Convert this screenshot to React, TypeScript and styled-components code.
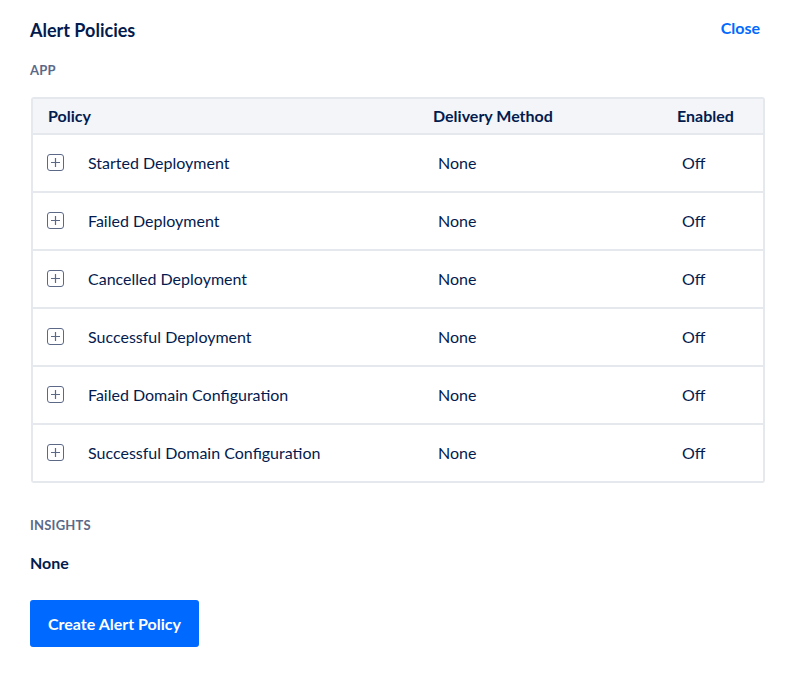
import React from "react";
import styled, { createGlobalStyle } from "styled-components";

const Global = createGlobalStyle`
  html, body { margin: 0; padding: 0; background: #fff; }
  body { font-family: "Lato", "Liberation Sans", sans-serif; color: #031b4e; }
`;

const Page = styled.div`
  padding: 18px 33px 36px 30px;
`;

const TopBar = styled.div`
  display: flex;
  justify-content: space-between;
  align-items: center;
  height: 24px;
`;

const Title = styled.h1`
  margin: 0;
  font-size: 18px;
  font-weight: 700;
  color: #031b4e;
`;

const CloseLink = styled.a`
  font-size: 16px;
  font-weight: 700;
  color: #0069ff;
  margin-right: 5px;
  margin-top: -6px;
  cursor: pointer;
`;

const SectionLabel = styled.div<{ $top: number }>`
  margin-top: ${(p) => p.$top}px;
  font-size: 13px;
  font-weight: 700;
  color: #5b6987;
  letter-spacing: 0.2px;
  line-height: 16px;
`;

const Table = styled.div`
  margin-top: 19px;
  margin-left: 1px;
  border: 2px solid #e5e8ed;
  border-radius: 3px;
`;

const Row = styled.div<{ $head?: boolean }>`
  display: grid;
  grid-template-columns: 400px 244px 1fr;
  align-items: center;
  box-sizing: border-box;
  height: ${(p) => (p.$head ? 36 : 58)}px;
  padding-bottom: 2px;
  background: ${(p) => (p.$head ? "#f3f5f9" : "#fff")};
  border-bottom: 2px solid #e5e8ed;
  &:last-child { border-bottom: none; height: 56px; }
  font-size: 16px;
  font-weight: ${(p) => (p.$head ? 700 : 400)};
`;

const HeadCell = styled.div<{ $first?: boolean }>`
  padding-left: ${(p) => (p.$first ? 15 : 0)}px;
`;

const Cell = styled.div`
  padding-left: 5px;
`;

const NameCell = styled.div`
  display: flex;
  align-items: center;
  padding-left: 14px;
  gap: 24px;
`;

const ExpandBox = styled.span`
  width: 15px;
  height: 15px;
  border: 1px solid #5b6987;
  border-radius: 3px;
  display: inline-flex;
  align-items: center;
  justify-content: center;
  flex: none;
`;

const Value = styled.div`
  margin-top: 20px;
  font-size: 16px;
  font-weight: 700;
`;

const PrimaryButton = styled.button`
  margin-top: 28px;
  width: 169px;
  height: 47px;
  border: none;
  border-radius: 3px;
  background: #0069ff;
  color: #fff;
  font-family: inherit;
  font-size: 16px;
  font-weight: 700;
  cursor: pointer;
`;

const policies = [
  "Started Deployment",
  "Failed Deployment",
  "Cancelled Deployment",
  "Successful Deployment",
  "Failed Domain Configuration",
  "Successful Domain Configuration",
];

const Plus = () => (
  <svg width="11" height="11" viewBox="0 0 11 11">
    <path d="M5.5 1v9M1 5.5h9" stroke="#5b6987" strokeWidth="1.2" fill="none" />
  </svg>
);

export default function App() {
  return (
    <Page>
      <Global />
      <TopBar>
        <Title>Alert Policies</Title>
        <CloseLink>Close</CloseLink>
      </TopBar>
      <SectionLabel $top={20}>APP</SectionLabel>
      <Table>
        <Row $head>
          <HeadCell $first>Policy</HeadCell>
          <HeadCell>Delivery Method</HeadCell>
          <HeadCell>Enabled</HeadCell>
        </Row>
        {policies.map((p) => (
          <Row key={p}>
            <NameCell>
              <ExpandBox>
                <Plus />
              </ExpandBox>
              {p}
            </NameCell>
            <Cell>None</Cell>
            <Cell>Off</Cell>
          </Row>
        ))}
      </Table>
      <SectionLabel $top={34}>INSIGHTS</SectionLabel>
      <Value>None</Value>
      <PrimaryButton>Create Alert Policy</PrimaryButton>
    </Page>
  );
}
